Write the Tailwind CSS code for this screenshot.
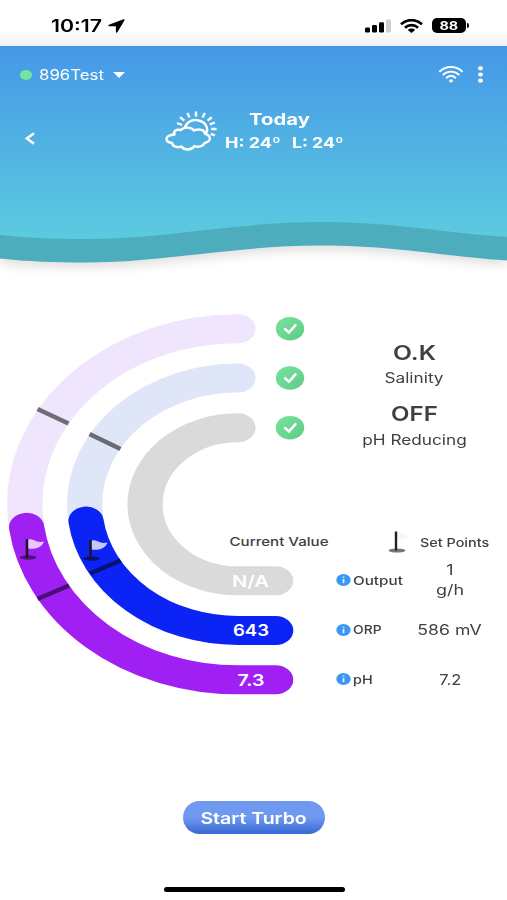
<!DOCTYPE html>
<html lang="en">
<head>
    <meta charset="UTF-8">
    <meta name="viewport" content="width=device-width, initial-scale=1.0">
    <title>Pool Control</title>
    <script src="https://cdn.jsdelivr.net/npm/@tailwindcss/browser@4"></script>
</head>
<body class="w-[507px] h-[900px] overflow-hidden bg-white font-['Inter','Liberation_Sans',sans-serif] text-[#404040]">
    <!-- Status bar -->
    <div class="h-[46px] flex items-center justify-between pt-[5px] pl-[51px] pr-[38px] bg-linear-to-b from-white from-65% to-[#f1f1f3] text-black">
        <div class="flex items-center gap-[5px]">
            <span class="w-[52px] mt-[2px] text-[17px] font-semibold leading-none whitespace-nowrap"><span class="inline-block origin-left scale-x-[1.25]">10:17</span></span>
            <svg class="w-[17px] h-[14px]" viewBox="0 0 18 15" preserveAspectRatio="none" fill="currentColor"><path d="M16.4.4 1 6.2c-1 .4-.8 1.5.3 1.5l7 .1.1 6c0 1 1.2 1.2 1.7.2L17.400 1.500c.4-.8-.2-1.400-1-1.100z"/></svg>
        </div>
        <div class="flex items-center gap-[9px]">
            <svg class="w-[26px] h-[14px]" viewBox="0 0 26 14"><rect y="8.500" width="5" height="5" rx="1.300"/><rect x="7" y="6" width="5" height="7.500" rx="1.300"/><rect x="14" y="3.300" width="5" height="10.200" rx="1.300"/><rect x="21" y=".5" width="5" height="13" rx="1.300" fill="#cfcfcf"/></svg>
            <svg class="w-[23px] h-[14px]" viewBox="0 0 23 14"><g fill="none" stroke="#000" stroke-width="2.600"><path d="M1 5.300C6.800-.3 16.200-.3 22 5.300"/><path d="M4.900 8.700c3.800-3.500 9.400-3.500 13.200 0"/></g><path d="M7.800 11c2.200-1.900 5.200-1.900 7.400 0l-3.700 3z"/></svg>
            <div class="flex items-center gap-px">
                <span class="w-[34px] h-[15px] rounded-[5px] bg-black text-white text-[12px] font-bold leading-[15px] text-center"><span class="inline-block scale-x-[1.2]">88</span></span>
                <span class="w-[2px] h-[5px] rounded-r bg-black"></span>
            </div>
        </div>
    </div>

    <!-- Header with wave -->
    <header class="relative h-[254px] text-white">
        <svg class="absolute inset-0 w-full h-full -z-10 overflow-visible" viewBox="0 46 507 254">
            <defs>
                <linearGradient id="sky" x1="0" y1="46" x2="0" y2="240" gradientUnits="userSpaceOnUse">
                    <stop offset="0" stop-color="#4598e7"/>
                    <stop offset="1" stop-color="#5ccbdf"/>
                </linearGradient>
                <filter id="soft" x="-5%" y="-5%" width="110%" height="120%"><feGaussianBlur stdDeviation="6"/></filter>
            </defs>
            <path d="M0 100V263C28 266 55 267 85 267C165 267 235 250 320 250C395 250 440 260 507 265V100z" fill="#000" opacity=".13" filter="url(#soft)"/>
            <path d="M0 46V258.500C28 261.500 55 262.500 85 262.500C165 262.500 235 245.500 320 245.500C395 245.500 440 256 507 260.500V46z" fill="#4eadbd"/>
            <path d="M0 46V235C28 238 55 239 85 239C165 239 235 222 320 222C395 222 440 232.500 507 237V46z" fill="url(#sky)"/>
        </svg>
        <div class="flex items-center justify-between h-[57px] pl-[20px] pr-[24px]">
            <div class="flex items-center">
                <span class="w-[12px] h-[10px] rounded-[50%] bg-[#73e69d]"></span>
                <span class="ml-[7px] w-[74px] text-[14.500px] whitespace-nowrap"><span class="inline-block origin-left scale-x-[1.16]">896Test</span></span>
                <svg class="w-[12px] h-[6px]" viewBox="0 0 12 6" fill="currentColor"><path d="M0 0h12L6 6z"/></svg>
            </div>
            <div class="flex items-center gap-[15px]">
                <svg class="w-[24px] h-[17px]" viewBox="0 0 24 17" fill="none" stroke="#fff" stroke-width="1.900" stroke-linecap="round"><path d="M1 5.300C7-.4 17-.4 23 5.300M4.200 8.600c4.500-4 11.100-4 15.600 0M7.600 11.700c2.600-2.200 6.200-2.200 8.800 0"/><ellipse cx="12" cy="14.800" rx="1.900" ry="1.600" fill="#fff" stroke="none"/></svg>
                <svg class="w-[5px] h-[17px]" viewBox="0 0 5 17" fill="#fff"><ellipse cx="2.500" cy="2.300" rx="2.500" ry="2.100"/><ellipse cx="2.500" cy="8.500" rx="2.500" ry="2.100"/><ellipse cx="2.500" cy="14.700" rx="2.500" ry="2.100"/></svg>
            </div>
        </div>
        <div class="flex items-start">
            <svg class="w-[10px] h-[13px] ml-[24.500px] mt-[29px]" viewBox="0 0 10 13" fill="none" stroke="#fff" stroke-width="2.500"><path d="M9 1.200 1.800 6.500 9 11.800"/></svg>
            <svg class="w-[54px] h-[42px] ml-[129px] mt-[7px]" viewBox="164 110 54 42" fill="none" stroke="#fff" stroke-width="2.400" stroke-linecap="round" stroke-linejoin="round">
                <path d="M174.500 134.500C173 131.500 176 128.800 181 130C184 126.500 191.500 127 194 130.500C199.500 128 205 130.500 205 133.800C211.500 135.500 211.500 141.500 204.500 143C203.500 146.500 197.500 147.500 194.500 146C191.500 150.500 184 150.500 181.500 146.500C177 148 172.500 146.500 172 143C164.500 141.500 164 135.500 174.500 134.500z"/>
                <path d="M185 127C187 121.500 193 119 198.500 120.500C205.500 122 209 128 206 133.500"/>
                <path stroke-linecap="butt" d="M196 111.500v5M187.400 113l2.200 4.600M204.800 113l-2.200 4.600M211.800 117.200l-4.200 3.400M180.100 117.200l4.200 3.500M177 123l5 2M214.800 122.500l-5 1.900M216.600 129h-5.300M215 135.500l-4.300-1.600"/>
            </svg>
            <div class="ml-[7px] mt-[5px] w-[120px] flex flex-col font-bold leading-[23px] whitespace-nowrap">
                <span class="ml-[24px] text-[16px]"><span class="inline-block origin-left scale-x-[1.27]">Today</span></span>
                <span class="flex text-[15px]">
                    <span class="w-[67px]"><span class="inline-block origin-left scale-x-[1.2]">H: 24º</span></span>
                    <span><span class="inline-block origin-left scale-x-[1.18]">L: 24º</span></span>
                </span>
            </div>
        </div>
    </header>

    <!-- Gauges and readings -->
    <main class="flex h-[404px]">
        <svg class="w-[330px] h-[404px] shrink-0" viewBox="0 300 330 404">
            <defs>
                <linearGradient id="ok" x1="0" y1="0" x2="1" y2="1"><stop stop-color="#79e39a"/><stop offset="1" stop-color="#5ccb89"/></linearGradient>
                <g id="check"><ellipse rx="14.200" ry="11.800" fill="url(#ok)"/><path d="M-5 .3-1 3.700 5.500-3.600" fill="none" stroke="#fff" stroke-width="2.500" stroke-linecap="round"/></g>
                <g id="pole"><ellipse cx="1" cy="18.500" rx="8.500" ry="2.200" fill="#000" opacity=".5"/><path d="M0 0v18.500" stroke="#1b1626" stroke-width="2.600"/></g>
                <path id="banner" d="M1.300.5C7-.5 9 4.500 17 2.500C15.500 7.500 9 11 1.300 9.500z" fill="#fff" opacity=".75"/>
            </defs>
            <!-- tracks, drawn round and stretched sideways -->
            <g transform="translate(238 504.300) scale(1.215 1)" fill="none" stroke-width="29" stroke-linecap="round">
                <path d="M0-175.500A175.500 175.500 0 0 0 0 175.500" stroke="#efe6fd"/>
                <path d="M0-126.200A126.200 126.200 0 0 0 0 126.200" stroke="#dfe6f7"/>
                <path d="M0-76.500A76.500 76.500 0 0 0 0 76.500H31" stroke="#dadada"/>
                <path d="M-174 23A175.500 175.500 0 0 0 0 175.500H31" stroke="#a020f4"/>
                <path d="M-125.100 16.800A126.200 126.200 0 0 0 0 126.200H31" stroke="#0b24f5"/>
            </g>
            <g stroke="#000" stroke-width="4.500" stroke-opacity=".53">
                <path d="M37.500 409 68.500 423.500M89.500 434 120.500 449M37.500 599 69 585.500M90 573.500 120.500 560.500"/>
            </g>
            <g transform="translate(27 539)"><use href="#pole"/><use href="#banner"/></g>
            <g transform="translate(90.500 540)"><use href="#pole"/><use href="#banner"/></g>
            <use href="#check" x="290" y="328.700"/>
            <use href="#check" x="290" y="378"/>
            <use href="#check" x="290" y="427.700"/>
            <text x="229.500" y="546.300" font-size="12" font-weight="500" textLength="99" lengthAdjust="spacingAndGlyphs" fill="#404040">Current Value</text>
            <g fill="#fff" font-size="16" font-weight="600">
                <text x="232" y="587" textLength="37" lengthAdjust="spacingAndGlyphs">N/A</text>
                <text x="233" y="636" textLength="36" lengthAdjust="spacingAndGlyphs">643</text>
                <text x="237.500" y="685.500" textLength="27" lengthAdjust="spacingAndGlyphs">7.3</text>
            </g>
        </svg>
        <div class="w-[177px] flex flex-col">
            <div class="flex flex-col items-center pr-[9px] pt-[40px] whitespace-nowrap">
                <span class="h-[26px] text-[20px] leading-[26px] font-semibold"><span class="inline-block scale-x-[1.23]">O.K</span></span>
                <span class="h-[24px] text-[14px] leading-[24px]"><span class="inline-block scale-x-[1.23]">Salinity</span></span>
                <span class="mt-[11px] h-[26px] text-[20px] leading-[26px] font-semibold"><span class="inline-block scale-x-[1.2]">OFF</span></span>
                <span class="h-[24px] text-[14px] leading-[26px]"><span class="inline-block scale-x-[1.23]">pH Reducing</span></span>
            </div>
            <div class="mt-[79px] h-[24px] flex items-center pl-[57px]">
                <svg class="w-[24px] h-[24px]" viewBox="0 0 24 24"><defs><filter id="base"><feGaussianBlur stdDeviation=".7"/></filter></defs><path d="M10 2.500C16 1.500 17 6 22 5C19 9 15 11 10 9z" fill="#f8f8f8"/><ellipse cx="10" cy="20.500" rx="8.500" ry="2" fill="#777" filter="url(#base)"/><path d="M9 1.500v19" stroke="#222" stroke-width="2.400"/></svg>
                <span class="ml-[8.500px] mt-px text-[12px] font-medium whitespace-nowrap"><span class="inline-block origin-left scale-x-[1.2]">Set Points</span></span>
            </div>
            <div class="mt-[1.500px] grid grid-rows-[49.500px_49.500px_49.500px]">
                <div class="flex items-center pl-[5.500px]">
                    <svg class="w-[15px] h-[12px]" viewBox="0 0 15 12"><ellipse cx="7.500" cy="6" rx="7.200" ry="5.900" fill="#3897f3"/><path d="M7.500 5v4.200M7.500 2.500v1.300" stroke="#d7ecff" stroke-width="1.800"/></svg>
                    <span class="ml-[2px] mt-px w-[61.500px] text-[12px] font-medium"><span class="inline-block origin-left scale-x-[1.27]">Output</span></span>
                    <span class="w-[72px] text-center text-[14px] leading-[20px]"><span class="inline-block scale-x-[1.28]">1<br>g/h</span></span>
                </div>
                <div class="flex items-center pl-[5.500px]">
                    <svg class="w-[15px] h-[12px]" viewBox="0 0 15 12"><ellipse cx="7.500" cy="6" rx="7.200" ry="5.900" fill="#3897f3"/><path d="M7.500 5v4.200M7.500 2.500v1.300" stroke="#d7ecff" stroke-width="1.800"/></svg>
                    <span class="ml-[2px] mt-px w-[61.500px] text-[12px] font-medium"><span class="inline-block origin-left scale-x-[1.16]">ORP</span></span>
                    <span class="w-[72px] text-center text-[14px] whitespace-nowrap"><span class="inline-block scale-x-[1.26]">586 mV</span></span>
                </div>
                <div class="flex items-center pl-[5.500px]">
                    <svg class="w-[15px] h-[12px]" viewBox="0 0 15 12"><ellipse cx="7.500" cy="6" rx="7.200" ry="5.900" fill="#3897f3"/><path d="M7.500 5v4.200M7.500 2.500v1.300" stroke="#d7ecff" stroke-width="1.800"/></svg>
                    <span class="ml-[2px] mt-px w-[61.500px] text-[12px] font-medium"><span class="inline-block origin-left scale-x-[1.2]">pH</span></span>
                    <span class="w-[72px] text-center text-[14px]"><span class="inline-block scale-x-[1.18]">7.2</span></span>
                </div>
            </div>
        </div>
    </main>

    <div class="flex flex-col items-center pt-[97px]">
        <button class="w-[142px] h-[33px] rounded-full bg-linear-to-b from-[#6f98ef] from-50% to-[#3868d2] text-white text-[16px] font-semibold whitespace-nowrap"><span class="inline-block scale-x-[1.22]">Start Turbo</span></button>
        <div class="mt-[53px] ml-px w-[181px] h-[5px] rounded-full bg-black"></div>
    </div>
</body>
</html>
